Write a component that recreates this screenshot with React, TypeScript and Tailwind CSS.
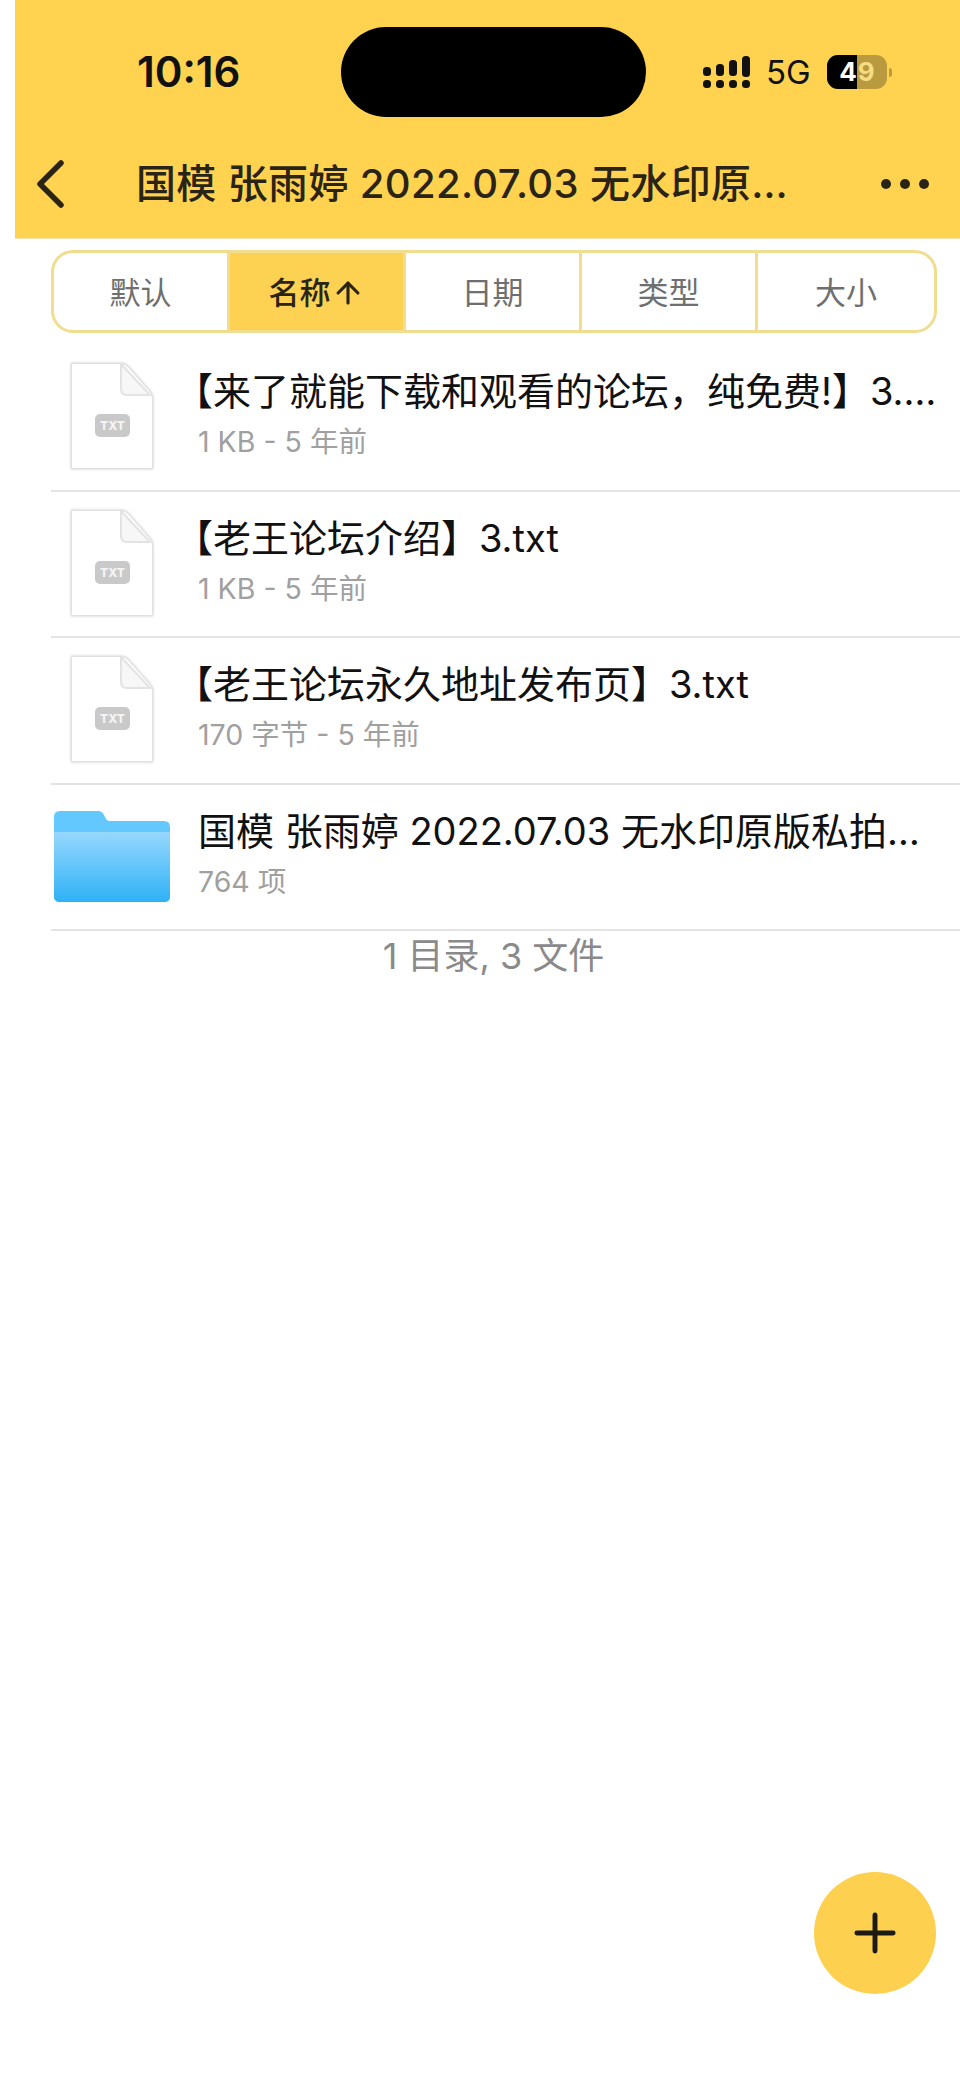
import { ArrowUp, Plus } from 'lucide-react';

const FONT = "font-['Inter','Noto_Sans_CJK_SC',sans-serif]";

function SignalIcon() {
    return (
        <svg width="50" height="34" viewBox="0 0 50 34" className="shrink-0">
            <rect x="1" y="12" width="8" height="9" rx="3.5" fill="#111" />
            <rect x="14" y="9" width="8" height="12" rx="3.5" fill="#111" />
            <rect x="27" y="5" width="8" height="16" rx="3.5" fill="#111" />
            <rect x="40" y="1" width="8" height="21" rx="3.5" fill="#111" />
            <rect x="1" y="25" width="8" height="8" rx="3.5" fill="#111" />
            <rect x="14" y="25" width="8" height="8" rx="3.5" fill="#111" />
            <rect x="27" y="25" width="8" height="8" rx="3.5" fill="#111" />
            <rect x="40" y="25" width="8" height="8" rx="3.5" fill="#111" />
        </svg>
    );
}

function Battery() {
    return (
        <div className="flex items-center gap-[2px]">
            <div className="relative h-[34px] w-[60px] overflow-hidden rounded-[11px] bg-[#b99a3f]">
                <div className="absolute inset-y-0 left-0 w-[30px] bg-black" />
                <div className="absolute inset-0 flex items-center justify-center gap-[1px] text-[26px] font-bold leading-none">
                    <span className="text-white">4</span>
                    <span className="text-[#f6dc83]">9</span>
                </div>
            </div>
            <div className="h-[9px] w-[3px] rounded-r-full bg-[#b99a3f]" />
        </div>
    );
}

function TxtIcon() {
    return (
        <svg width="90" height="114" viewBox="0 0 90 114" className="shrink-0">
            <defs>
                <filter id="fileShadow" x="-10%" y="-10%" width="120%" height="120%">
                    <feGaussianBlur stdDeviation="0.9" />
                </filter>
            </defs>
            <path
                d="M5 4 H54 Q58 4 61 7 L82 31 Q85 34 85 38 V108 H5 Z"
                fill="#ddd"
                stroke="#d8d8d8"
                strokeWidth="3"
                strokeLinejoin="round"
                filter="url(#fileShadow)"
            />
            <path d="M5 4 H54 Q58 4 61 7 L82 31 Q85 34 85 38 V108 H5 Z" fill="#fff" />
            <path d="M54 4 V29 Q54 35 60 35 H83 Z" fill="#f7f7f7" stroke="#e3e3e3" strokeWidth="2" strokeLinejoin="round" />
            <rect x="28" y="54" width="35" height="23" rx="5" fill="#c9c9c9" />
            <text x="45.5" y="70" textAnchor="middle" fontSize="12" fontWeight="800" fill="#f4f4f4" fontFamily="Inter, sans-serif">
                TXT
            </text>
        </svg>
    );
}

function FolderIcon() {
    return (
        <svg width="116" height="91" viewBox="0 0 116 91" className="shrink-0">
            <defs>
                <linearGradient id="folderBody" x1="0" y1="0" x2="0" y2="1">
                    <stop offset="0" stopColor="#96d8fd" />
                    <stop offset="1" stopColor="#2fb1f6" />
                </linearGradient>
            </defs>
            <path
                d="M0 6 Q0 0 6 0 H44 Q48 0 50 4 L52 8 Q53 10 56 10 H110 Q116 10 116 16 V85 Q116 91 110 91 H6 Q0 91 0 85 Z"
                fill="#63c8fd"
            />
            <path d="M0 21 H116 V85 Q116 91 110 91 H6 Q0 91 0 85 Z" fill="url(#folderBody)" />
        </svg>
    );
}

const tabs = ['默认', '名称', '日期', '类型', '大小'];

const files = [
    { title: '【来了就能下载和观看的论坛，纯免费!】3.txt.txt', meta: '1 KB - 5 年前' },
    { title: '【老王论坛介绍】3.txt', meta: '1 KB - 5 年前' },
    { title: '【老王论坛永久地址发布页】3.txt', meta: '170 字节 - 5 年前' },
];

export default function App() {
    return (
        <div className={`${FONT} relative min-h-[2078px] w-[960px] overflow-hidden bg-white`}>
            {/* Yellow header: status bar + nav */}
            <header className="ml-[15px] h-[239px] border-b border-[#f3e3ac] bg-[#ffd34f]">
                <div className="flex h-[144px] items-center pl-[122px]">
                    <span className="w-[204px] text-[42px] font-semibold leading-none text-[#111]">10:16</span>
                    <div className="h-[90px] w-[305px] rounded-full bg-black" />
                    <div className="ml-[56px]">
                        <SignalIcon />
                    </div>
                    <span className="ml-[14px] w-[47px] text-[33px] font-normal leading-none text-[#111]">5G</span>
                    <div className="ml-[14px]">
                        <Battery />
                    </div>
                </div>
                <div className="flex h-[80px] items-center">
                    <svg width="30" height="50" viewBox="0 0 30 50" className="ml-[20px] shrink-0">
                        <path d="M26 4 L5 25 L26 46" fill="none" stroke="#2a2417" strokeWidth="5.5" strokeLinecap="round" strokeLinejoin="round" />
                    </svg>
                    <h1 className="ml-[71px] w-[660px] truncate text-[40px] font-medium leading-none tracking-[0.35px] text-[#2a2417]">
                        国模 张雨婷 2022.07.03 无水印原版私拍套图合集
                    </h1>
                    <div className="ml-[85px] flex items-center gap-[9px]">
                        <span className="size-[10px] rounded-full bg-[#2a2417]" />
                        <span className="size-[10px] rounded-full bg-[#2a2417]" />
                        <span className="size-[10px] rounded-full bg-[#2a2417]" />
                    </div>
                </div>
            </header>

            {/* Sort tabs */}
            <div className="ml-[51px] mt-[11px] grid h-[83px] w-[886px] grid-cols-5 divide-x-[3px] divide-[#f0dd8f] overflow-hidden rounded-[22px] border-[3px] border-[#f0dd8f]">
                {tabs.map(tab => (
                    <div
                        key={tab}
                        className={
                            tab === '名称'
                                ? 'flex items-center justify-center bg-[#fdd252] pt-[3px] text-[31px] font-medium text-[#2a2417]'
                                : 'flex items-center justify-center pt-[3px] text-[31px] text-[#6f6f6f]'
                        }
                    >
                        {tab}
                        {tab === '名称' && <ArrowUp size={34} strokeWidth={2.2} />}
                    </div>
                ))}
            </div>

            {/* File list */}
            <div className="ml-[51px] mt-[12px]">
                {files.map(file => (
                    <div key={file.title} className="flex h-[146.5px] items-center border-b-2 border-[#e4e4e4]">
                        <div className="flex w-[122px] shrink-0 justify-center">
                            <TxtIcon />
                        </div>
                        <div className="min-w-0 flex-1">
                            <p className="ml-[2px] mt-[-8px] w-[770px] truncate text-[38px] leading-[46px] text-[#111]">
                                {file.title}
                            </p>
                            <p className="mt-[12px] pl-[25px] text-[28.5px] leading-[32px] text-[#a0a0a0]">{file.meta}</p>
                        </div>
                    </div>
                ))}
                <div className="flex h-[146.5px] items-center border-b-2 border-[#e4e4e4]">
                    <div className="flex w-[122px] shrink-0 justify-center">
                        <FolderIcon />
                    </div>
                    <div className="min-w-0 flex-1 pl-[25px]">
                        <p className="mt-[-8px] w-[735px] truncate text-[38px] leading-[46px] text-[#111]">
                            国模 张雨婷 2022.07.03 无水印原版私拍套图合集
                        </p>
                        <p className="mt-[12px] text-[28.5px] leading-[32px] text-[#a0a0a0]">764 项</p>
                    </div>
                </div>
            </div>

            <p className="ml-[51px] mt-[4px] w-[885px] text-center text-[36px] leading-[42px] text-[#8a8a8a]">
                1 目录, 3 文件
            </p>

            {/* Floating add button */}
            <button className="absolute left-[814px] top-[1872px] flex size-[122px] items-center justify-center rounded-full bg-[#fdd04f]">
                <Plus size={62} strokeWidth={1.9} className="text-[#1c1a12]" />
            </button>
        </div>
    );
}
